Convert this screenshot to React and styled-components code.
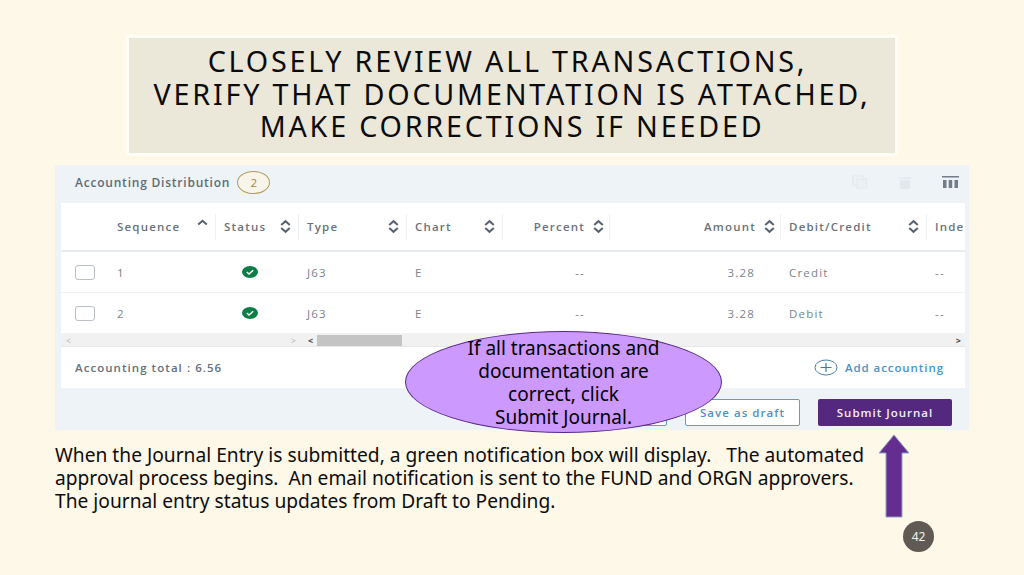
import React from "react";
import styled, { createGlobalStyle } from "styled-components";

const rows = [
  { seq: 1, side: "Credit" },
  { seq: 2, side: "Debit" },
];

export default function App() {
  return (
    <Slide>
      <GlobalStyle />
      <TitleBox>
        <TitleLine $shift={9}>Closely review all transactions,</TitleLine>
        <TitleLine>verify that documentation is attached,</TitleLine>
        <TitleLine>make corrections if needed</TitleLine>
      </TitleBox>

      <Panel>
        <PanelHead>
          <PanelTitle>Accounting Distribution</PanelTitle>
          <CountBadge>2</CountBadge>
          <Tools>
            <CopyIcon />
            <TrashIcon />
            <ColumnsIcon />
          </Tools>
        </PanelHead>

        <TableCard>
          <HeadRow>
            <HeadCell $first>
              Sequence
              <SortUp />
            </HeadCell>
            <HeadCell>
              Status
              <Sort />
            </HeadCell>
            <HeadCell>
              Type
              <Sort />
            </HeadCell>
            <HeadCell>
              Chart
              <Sort />
            </HeadCell>
            <HeadCell $right $tail={4}>
              Percent
              <Sort $near />
            </HeadCell>
            <HeadCell $right $tail={4}>
              Amount
              <Sort $near />
            </HeadCell>
            <HeadCell>
              Debit/Credit
              <Sort />
            </HeadCell>
            <HeadCell $cut>Inde</HeadCell>
          </HeadRow>

          {rows.map((r) => (
            <BodyRow key={r.seq}>
              <SeqCell>
                <Check />
                {r.seq}
              </SeqCell>
              <StatusCell>
                <StatusIcon />
              </StatusCell>
              <Cell>J63</Cell>
              <Cell>E</Cell>
              <Cell $right $tail={25}>
                --
              </Cell>
              <Cell $right $tail={26}>
                3.28
              </Cell>
              <Cell>{r.side}</Cell>
              <Cell>--</Cell>
            </BodyRow>
          ))}

          <ScrollRow>
            <ScrollLeft>
              <Arrow>&lt;</Arrow>
              <Arrow>&gt;</Arrow>
            </ScrollLeft>
            <ScrollRight>
              <DarkArrow>&lt;</DarkArrow>
              <Thumb />
              <DarkArrow $end>&gt;</DarkArrow>
            </ScrollRight>
          </ScrollRow>

          <TableFoot>
            <Total>Accounting total : 6.56</Total>
            <AddLink>
              <PlusIcon />
              Add accounting
            </AddLink>
          </TableFoot>
        </TableCard>

        <Actions>
          <GhostButton />
          <GhostButton>Save as draft</GhostButton>
          <SubmitButton>Submit Journal</SubmitButton>
        </Actions>

        <Callout>
          <div>If all transactions and</div>
          <div>documentation are</div>
          <div>correct, click</div>
          <div>Submit Journal.</div>
        </Callout>
      </Panel>

      <Notes>
        <div>When the Journal Entry is submitted, a green notification box will display. &nbsp; The automated</div>
        <div>approval process begins. &nbsp;An email notification is sent to the FUND and ORGN approvers.</div>
        <div>The journal entry status updates from Draft to Pending.</div>
      </Notes>

      <UpArrow viewBox="0 0 32 84">
        <path d="M16 1 L31 19 H24 V83 H8 V19 H1 Z" fill="#652d90" stroke="#8fa3c4" strokeWidth="1" />
      </UpArrow>
      <PageNumber>42</PageNumber>
    </Slide>
  );
}

function Sort({ $near }) {
  return (
    <SortSvg $near={$near} viewBox="0 0 12 14">
      <path d="M2 5.5 L6 2 L10 5.5 M2 8.5 L6 12 L10 8.5" />
    </SortSvg>
  );
}

function SortUp() {
  return (
    <SortSvg $raise viewBox="0 0 12 14">
      <path d="M2 7 L6 3.5 L10 7" />
    </SortSvg>
  );
}

function StatusIcon() {
  return (
    <svg width="16" height="12" viewBox="0 0 16 12">
      <ellipse cx="8" cy="6" rx="8" ry="6" fill="#0b7d45" />
      <path d="M4.8 6 L7 8 L11.2 4.2" fill="none" stroke="#fff" strokeWidth="1.5" />
    </svg>
  );
}

function PlusIcon() {
  return (
    <svg width="24" height="17" viewBox="0 0 24 17">
      <ellipse cx="12" cy="8.5" rx="11" ry="7.5" fill="none" stroke="#4b7ea6" strokeWidth="1" />
      <path d="M12 4 V13 M6.5 8.5 H17.5" stroke="#3c7cab" strokeWidth="1.2" />
    </svg>
  );
}

function CopyIcon() {
  return (
    <svg width="16" height="14" viewBox="0 0 16 14">
      <rect x="1" y="1" width="10" height="9" fill="none" stroke="#e6eaef" strokeWidth="1.4" />
      <rect x="4.5" y="4" width="10" height="9" fill="#ebf0f5" stroke="#e6eaef" strokeWidth="1.4" />
    </svg>
  );
}

function TrashIcon() {
  return (
    <svg width="12" height="13" viewBox="0 0 12 13">
      <path d="M0 1.5 H12 V3 H0 Z M1 4 H11 V13 H1 Z" fill="#e4e8ed" />
    </svg>
  );
}

function ColumnsIcon() {
  return (
    <svg width="17" height="12" viewBox="0 0 17 12">
      <path d="M0 0 H17 V1.6 H0 Z M1 4 H4.5 V12 H1 Z M6.7 4 H10.2 V12 H6.7 Z M12.5 4 H16 V12 H12.5 Z" fill="#727d88" />
    </svg>
  );
}

const GlobalStyle = createGlobalStyle`
  html, body {
    margin: 0;
    padding: 0;
    background: #fef8e8;
  }
`;

const Slide = styled.div`
  position: relative;
  width: 1024px;
  height: 575px;
  overflow: hidden;
  padding-top: 35px;
  box-sizing: border-box;
  background: #fef8e8;
  font-family: "Noto Sans", "Open Sans", sans-serif;
  color: #000;
`;

const TitleBox = styled.div`
  box-sizing: border-box;
  width: 772px;
  height: 121px;
  margin-left: 126px;
  padding-top: 7px;
  background: #ebe7d9;
  border: 3px solid #fffdf6;
  text-align: center;
  text-transform: uppercase;
  font-size: 28.7px;
  line-height: 32.5px;
  letter-spacing: 2.8px;
  color: #0b0b0b;
`;

const TitleLine = styled.div`
  padding-right: ${(p) => p.$shift || 0}px;
`;

const Panel = styled.div`
  position: relative;
  box-sizing: border-box;
  width: 914px;
  height: 265px;
  margin: 9px 0 0 55px;
  padding: 0 4px 0 6px;
  background: #eef3f8;
  font-family: "Open Sans", "Noto Sans", sans-serif;
`;

const PanelHead = styled.div`
  display: flex;
  align-items: center;
  height: 34px;
  padding: 0 0 4px 14px;
  box-sizing: content-box;
`;

const PanelTitle = styled.span`
  font-size: 12px;
  font-weight: 600;
  letter-spacing: 0.78px;
  color: #5f6b76;
`;

const CountBadge = styled.span`
  display: flex;
  align-items: center;
  justify-content: center;
  width: 33px;
  height: 23px;
  margin-left: 7px;
  border: 1px solid #b59b5c;
  border-radius: 50%;
  box-sizing: border-box;
  font-size: 11.5px;
  color: #a8843a;
  background: #f7f4ea;
`;

const Tools = styled.div`
  display: flex;
  align-items: center;
  gap: 31px;
  margin-left: auto;
  padding-right: 6px;
`;

const TableCard = styled.div`
  background: #fff;
`;

const columns = "155px 83px 108px 96px 107px 171px 146px 38px";

const HeadRow = styled.div`
  display: grid;
  grid-template-columns: ${columns};
  align-items: center;
  height: 47px;
  border-bottom: 2px solid #e8ebee;
  overflow: hidden;
`;

const HeadCell = styled.div`
  display: flex;
  align-items: center;
  box-sizing: border-box;
  height: 26px;
  padding-left: ${(p) => (p.$first ? "56px" : "8px")};
  padding-right: ${(p) => p.$tail || 6}px;
  justify-content: ${(p) => (p.$right ? "flex-end" : "flex-start")};
  border-right: ${(p) => (p.$cut ? "none" : "1px solid #edf0f2")};
  font-size: 11.5px;
  font-weight: 600;
  letter-spacing: 1.2px;
  color: #69737d;
  white-space: nowrap;
  overflow: hidden;
`;

const SortSvg = styled.svg`
  flex: none;
  width: 13px;
  height: 15px;
  margin-left: ${(p) => (p.$near ? "7px" : "auto")};
  margin-top: ${(p) => (p.$raise ? "-5px" : "-1px")};

  path {
    fill: none;
    stroke: #59636d;
    stroke-width: 1.9;
  }
`;

const BodyRow = styled.div`
  display: grid;
  grid-template-columns: ${columns};
  align-items: center;
  height: 40px;
  border-bottom: 1px solid #f0f2f4;
  font-size: 11.5px;
  letter-spacing: 1.2px;
  color: #7b848c;
`;

const Cell = styled.div`
  padding-left: 8px;
  padding-right: ${(p) => p.$tail || 0}px;
  text-align: ${(p) => (p.$right ? "right" : "left")};
  white-space: nowrap;
`;

const SeqCell = styled.div`
  display: flex;
  align-items: center;
  padding-left: 14px;
`;

const Check = styled.span`
  box-sizing: border-box;
  width: 20px;
  height: 15px;
  margin-right: 22px;
  border: 1px solid #b9bfc5;
  border-radius: 3px;
  background: #fff;
`;

const StatusCell = styled.div`
  display: flex;
  justify-content: center;
  padding-right: 16px;
`;

const ScrollRow = styled.div`
  display: flex;
  height: 12px;
  background: #f1f1f1;
  border-bottom: 1px solid #e4e6e8;
  box-sizing: content-box;
`;

const ScrollLeft = styled.div`
  display: flex;
  justify-content: space-between;
  align-items: center;
  width: 240px;
  padding: 0 5px;
  box-sizing: border-box;
`;

const ScrollRight = styled.div`
  display: flex;
  flex: 1;
  align-items: center;
  padding-left: 7px;
`;

const Arrow = styled.span`
  font-size: 9px;
  line-height: 1;
  color: #b5b8bb;
`;

const DarkArrow = styled.span`
  margin-left: ${(p) => (p.$end ? "auto" : "0")};
  padding-right: 4px;
  font-size: 9px;
  font-weight: 700;
  line-height: 1;
  color: #444;
`;

const Thumb = styled.span`
  width: 85px;
  height: 11px;
  background: #c4c4c4;
`;

const TableFoot = styled.div`
  display: flex;
  align-items: center;
  justify-content: space-between;
  height: 41px;
  padding: 0 21px 0 14px;
`;

const Total = styled.span`
  font-size: 11.5px;
  font-weight: 600;
  letter-spacing: 1.05px;
  color: #66707a;
`;

const AddLink = styled.span`
  display: flex;
  align-items: center;
  gap: 7px;
  font-size: 11.5px;
  font-weight: 600;
  letter-spacing: 0.93px;
  color: #4a93c8;
`;

const Actions = styled.div`
  display: flex;
  justify-content: flex-end;
  gap: 18px;
  padding: 11px 13px 0 0;
`;

const GhostButton = styled.button`
  box-sizing: border-box;
  width: 115px;
  height: 27px;
  padding: 0;
  border: 1px solid #5b9fcf;
  border-radius: 2px;
  background: #fff;
  font: 600 11.5px "Open Sans", sans-serif;
  letter-spacing: 1.05px;
  color: #4a93c8;
`;

const SubmitButton = styled.button`
  box-sizing: border-box;
  width: 134px;
  height: 27px;
  padding: 0;
  border: none;
  border-radius: 2px;
  background: #55287f;
  font: 600 11.5px "Open Sans", sans-serif;
  letter-spacing: 1px;
  color: #f2eef7;
`;

const Callout = styled.div`
  position: absolute;
  left: 350px;
  top: 166px;
  box-sizing: border-box;
  width: 317px;
  height: 102px;
  padding-top: 5px;
  border: 1px solid #5b2a86;
  border-radius: 50%;
  background: #cc99ff;
  font-family: "Noto Sans", sans-serif;
  font-size: 19px;
  line-height: 23px;
  text-align: center;
  color: #000;
`;

const Notes = styled.div`
  margin: 13px 0 0 55px;
  font-size: 19.2px;
  line-height: 23px;
  color: #0c0c0c;
  white-space: nowrap;
`;

const UpArrow = styled.svg`
  position: absolute;
  left: 878px;
  top: 434px;
  width: 32px;
  height: 84px;
`;

const PageNumber = styled.div`
  position: absolute;
  left: 903px;
  top: 521px;
  display: flex;
  align-items: center;
  justify-content: center;
  width: 31px;
  height: 31px;
  border-radius: 50%;
  background: #5f5b54;
  font-size: 12px;
  color: #f4f2ec;
`;
